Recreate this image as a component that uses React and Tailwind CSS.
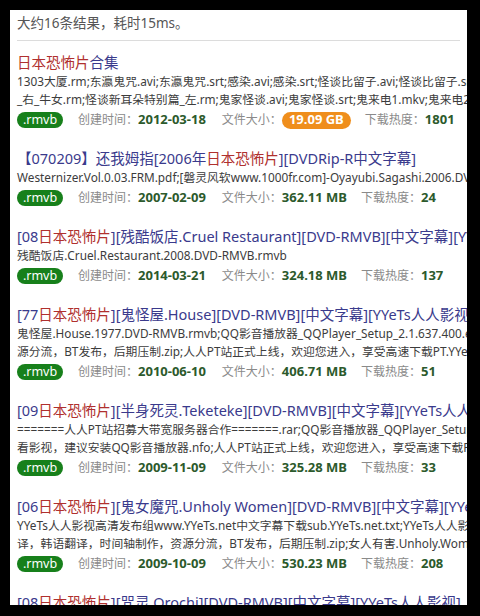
import React from 'react';

const RED = 'text-[#b0302e]';

const results = [
    {
        title: [['r', '日本恐怖片'], ['b', '合集']],
        desc: [
            '1303大厦.rm;东瀛鬼咒.avi;东瀛鬼咒.srt;感染.avi;感染.srt;怪谈比留子.avi;怪谈比留子.srt;怪谈新耳朵特别篇',
            '_右_牛女.rm;怪谈新耳朵特别篇_左.rm;鬼家怪谈.avi;鬼家怪谈.srt;鬼来电1.mkv;鬼来电2.rmvb'
        ],
        date: '2012-03-18',
        size: '19.09 GB',
        big: true,
        hot: '1801'
    },
    {
        title: [['b', '【070209】还我姆指[2006年'], ['r', '日本恐怖片'], ['b', '][DVDRip-R中文字幕]']],
        desc: ['Westernizer.Vol.0.03.FRM.pdf;[磐灵风软www.1000fr.com]-Oyayubi.Sagashi.2006.DVDRip.rmvb'],
        date: '2007-02-09',
        size: '362.11 MB',
        hot: '24'
    },
    {
        title: [['b', '[08'], ['r', '日本恐怖片'], ['b', '][残酷饭店.Cruel Restaurant][DVD-RMVB][中文字幕][YYeTs人人影视]']],
        desc: ['残酷饭店.Cruel.Restaurant.2008.DVD-RMVB.rmvb'],
        date: '2014-03-21',
        size: '324.18 MB',
        hot: '137'
    },
    {
        title: [['b', '[77'], ['r', '日本恐怖片'], ['b', '][鬼怪屋.House][DVD-RMVB][中文字幕][YYeTs人人影视]']],
        desc: [
            '鬼怪屋.House.1977.DVD-RMVB.rmvb;QQ影音播放器_QQPlayer_Setup_2.1.637.400.exe;YYeTs人人影视',
            '源分流，BT发布，后期压制.zip;人人PT站正式上线，欢迎您进入，享受高速下载PT.YYeTs.txt'
        ],
        date: '2010-06-10',
        size: '406.71 MB',
        hot: '51'
    },
    {
        title: [['b', '[09'], ['r', '日本恐怖片'], ['b', '][半身死灵.Teketeke][DVD-RMVB][中文字幕][YYeTs人人影视]']],
        desc: [
            '=======人人PT站招募大带宽服务器合作=======.rar;QQ影音播放器_QQPlayer_Setup',
            '看影视，建议安装QQ影音播放器.nfo;人人PT站正式上线，欢迎您进入，享受高速下载PT.txt'
        ],
        date: '2009-11-09',
        size: '325.28 MB',
        hot: '33'
    },
    {
        title: [['b', '[06'], ['r', '日本恐怖片'], ['b', '][鬼女魔咒.Unholy Women][DVD-RMVB][中文字幕][YYeTs人人影视]']],
        desc: [
            'YYeTs人人影视高清发布组www.YYeTs.net中文字幕下载sub.YYeTs.net.txt;YYeTs人人影视',
            '译，韩语翻译，时间轴制作，资源分流，BT发布，后期压制.zip;女人有害.Unholy.Woman.rmvb'
        ],
        date: '2009-10-09',
        size: '530.23 MB',
        hot: '208'
    },
    {
        title: [['b', '[08'], ['r', '日本恐怖片'], ['b', '][咒灵.Orochi][DVD-RMVB][中文字幕][YYeTs人人影视]']],
        desc: [],
        date: null
    }
];

const ResultItem = ({ item }) => (
    <div className="mb-[18px]">
        <div className="whitespace-nowrap text-[14.5px] leading-[20px]">
            {item.title.map(([c, t], i) => (
                <span key={i} className={c === 'r' ? RED : 'text-[#3a3a8c]'}>{t}</span>
            ))}
        </div>
        {item.desc.map((line, i) => (
            <div key={i} className="whitespace-nowrap text-[11.8px] leading-[18px] text-[#3c3c3c]">{line}</div>
        ))}
        {item.date && (
            <div className="mt-[2px] flex h-[20px] items-center whitespace-nowrap text-[12px] text-[#8a8a8a]">
                <span className="flex h-[16px] w-[46px] items-center justify-center rounded-full bg-[#17801b] text-[12.5px] text-white">.rmvb</span>
                <span className="ml-[15px]">创建时间：</span>
                <span className="text-[13px] font-bold text-[#2c5a2c]">{item.date}</span>
                <span className="ml-[16px]">文件大小：</span>
                {item.big ? (
                    <span className="flex h-[17px] w-[69px] items-center justify-center rounded-full bg-[#ef8e1c] text-[13px] font-bold text-white">{item.size}</span>
                ) : (
                    <span className="text-[13px] font-bold text-[#2c5a2c]">{item.size}</span>
                )}
                <span className="ml-[14px]">下载热度：</span>
                <span className="text-[13px] font-bold text-[#2c5a2c]">{item.hot}</span>
            </div>
        )}
    </div>
);

export default function App() {
    return (
        <div
            className="h-[616px] w-[480px] bg-black pb-[11px] pl-[10px] pr-[13px] pt-[10px]"
            style={{ fontFamily: '"Noto Sans", "Noto Sans CJK SC", sans-serif' }}
        >
            <div className="h-full overflow-hidden bg-white px-[7px]">
                <div className="border-b border-[#dcdcdc] pb-[7px] pt-[3px] text-[13.5px] leading-[20px] text-[#555]">
                    大约16条结果，耗时15ms。
                </div>
                <div className="pt-[11px]">
                    {results.map((item, i) => (
                        <ResultItem key={i} item={item} />
                    ))}
                </div>
            </div>
        </div>
    );
}
